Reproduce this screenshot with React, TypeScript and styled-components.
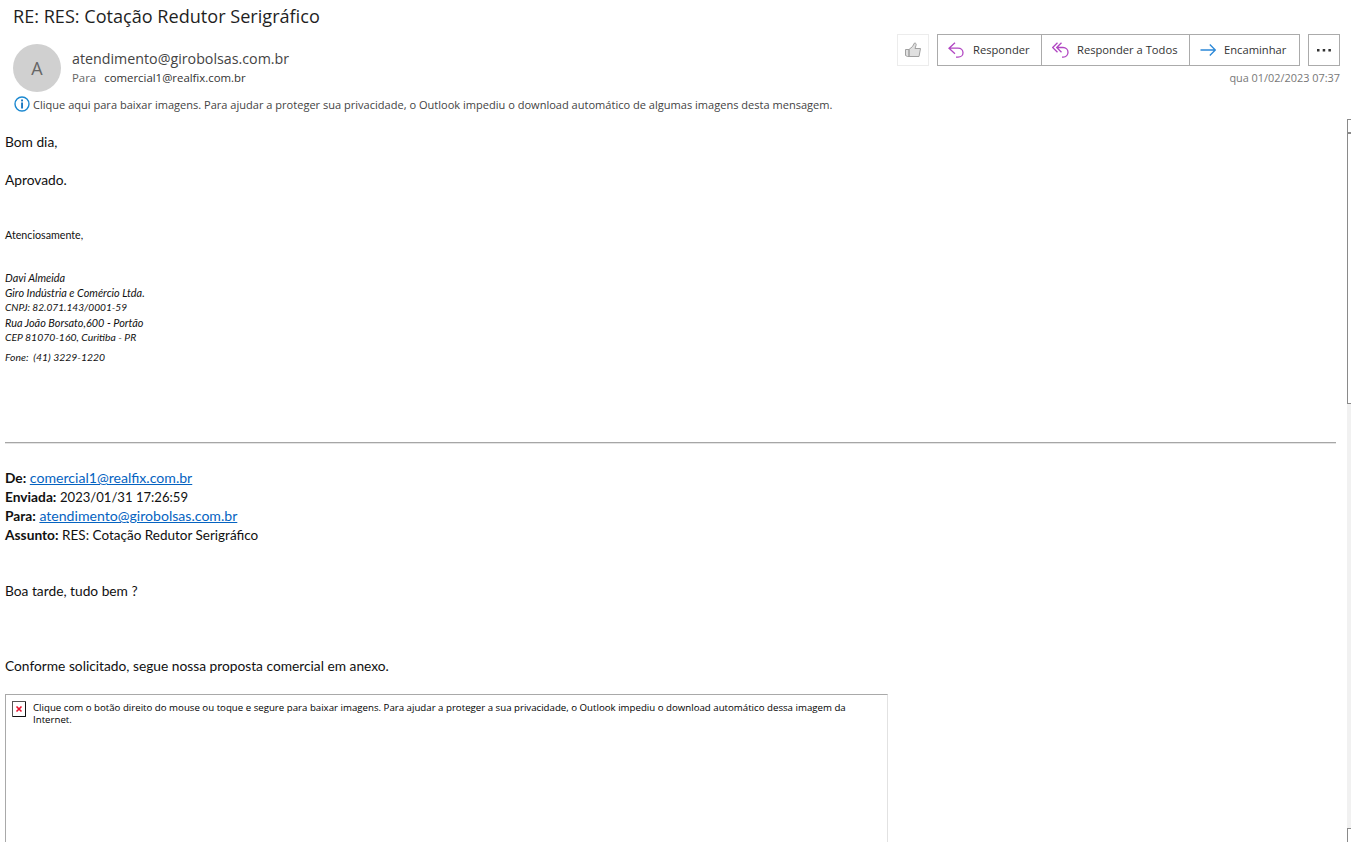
import React from "react";
import styled, { createGlobalStyle } from "styled-components";

const Global = createGlobalStyle`
  html, body { margin: 0; padding: 0; background: #fff; }
  body { font-family: "Open Sans", "Liberation Sans", sans-serif; color: #000; }
`;

const Page = styled.div`
  position: relative;
  width: 1351px;
  height: 842px;
  overflow: hidden;
  background: #fff;
`;

const Header = styled.header`
  height: 118px;
  padding: 6px 11px 0 13px;
  box-sizing: border-box;
`;

const Title = styled.h1`
  margin: 0;
  height: 24px;
  font-size: 18.1px;
  line-height: 21px;
  font-weight: 400;
  color: #1f1f1f;
`;

const HeaderRow = styled.div`
  display: flex;
  justify-content: space-between;
  align-items: flex-start;
  height: 58px;
  padding-top: 4px;
`;

const Sender = styled.div`
  display: flex;
  gap: 11px;
  margin-top: 10px;
`;

const Avatar = styled.div`
  width: 48px;
  height: 48px;
  border-radius: 50%;
  background: #d0d0d0;
  color: #666;
  font-size: 18px;
  display: flex;
  align-items: center;
  justify-content: center;
`;

const SenderText = styled.div`
  padding-top: 5px;
`;

const SenderName = styled.div`
  font-size: 14.25px;
  line-height: 20px;
  color: #444;
`;

const Recipient = styled.div`
  display: flex;
  gap: 8px;
  font-size: 11.4px;
  line-height: 17px;
  color: #333;
`;

const RecipientLabel = styled.span`
  color: #666;
`;

const Actions = styled.div`
  display: flex;
  flex-direction: column;
  align-items: flex-end;
`;

const ActionBar = styled.div`
  display: flex;
  align-items: center;
`;

const LikeButton = styled.button`
  width: 32px;
  height: 32px;
  margin-right: 8px;
  padding: 0;
  background: #fff;
  border: 1px solid #ececec;
  display: flex;
  align-items: center;
  justify-content: center;
`;

const Group = styled.div`
  display: flex;
  height: 32px;
  box-sizing: border-box;
  border: 1px solid #ababab;
`;

const ActionButton = styled.button<{ $width: number }>`
  width: ${(p) => p.$width}px;
  display: flex;
  align-items: center;
  gap: 8px;
  padding: 0 0 2px 10px;
  background: #fff;
  border: 0;
  border-right: 1px solid #ababab;
  font-family: inherit;
  font-size: 11.2px;
  color: #333;
  white-space: nowrap;
  &:last-child { border-right: 0; }
  svg { margin-top: 2px; }
`;

const MoreButton = styled.button`
  width: 32px;
  height: 32px;
  margin-left: 8px;
  padding: 0;
  background: #fff;
  border: 1px solid #ababab;
  display: flex;
  align-items: center;
  justify-content: center;
`;

const DateText = styled.div`
  font-size: 10.9px;
  line-height: 16px;
  margin-top: 4px;
  color: #777;
`;

const Notice = styled.div`
  display: flex;
  align-items: center;
  gap: 3px;
  margin-left: 1px;
  margin-top: 3px;
  height: 18px;
  font-size: 11.05px;
  color: #444;
  white-space: nowrap;
`;

const Body = styled.main`
  padding: 14px 15px 0 5px;
  font-family: Lato, "Liberation Sans", sans-serif;
  font-size: 13.75px;
  color: #111;
`;

const Para = styled.p<{ $top?: number }>`
  margin: ${(p) => p.$top ?? 0}px 0 0;
  line-height: 19px;
`;

const Small = styled.p`
  margin: 38px 0 0;
  font-size: 10.7px;
  line-height: 15px;
`;

const Signature = styled.div`
  margin-top: 28px;
  font-style: italic;
`;

const SignatureLine = styled.div<{ $size?: number; $gap?: number }>`
  font-size: ${(p) => p.$size ?? 10.9}px;
  line-height: 15px;
  margin-top: ${(p) => p.$gap ?? 0}px;
`;

const Rule = styled.hr`
  margin: 77px 0 0;
  border: 0;
  border-top: 1px solid #a6a6a6;
  border-bottom: 1px solid #e4e4e4;
`;

const Meta = styled.div`
  margin-top: 24px;
`;

const MetaLine = styled.div`
  height: 19px;
  line-height: 19px;
`;

const MetaLabel = styled.b`
  font-weight: 700;
`;

const MetaValue = styled.span<{ $size: number }>`
  font-size: ${(p) => p.$size}px;
`;

const MailLink = styled.a`
  color: #0563c1;
  font-size: 14.1px;
  text-decoration: underline;
`;

const Placeholder = styled.div`
  margin-top: 19px;
  width: 883px;
  height: 160px;
  box-sizing: border-box;
  border: 1px solid #a9a9a9;
  border-right-color: #e2e2e2;
  padding: 7px 38px 0 6px;
  display: flex;
  gap: 7px;
  font-family: "Open Sans", "Liberation Sans", sans-serif;
  font-size: 9.68px;
  line-height: 12px;
  color: #000;
`;

const BrokenImage = styled.span`
  flex: none;
  width: 14px;
  height: 16px;
  margin-top: -1px;
`;

const Scrollbar = styled.div`
  position: absolute;
  right: 0;
  top: 119px;
  bottom: 0;
  width: 4px;
  background: #f1f1f1;
  display: flex;
  flex-direction: column;
  justify-content: space-between;
`;

const ScrollUp = styled.div`
  height: 14px;
  background: #fff;
  border: 1px solid #8a8a8a;
  border-right: 0;
  box-sizing: border-box;
`;

const ScrollThumb = styled.div`
  height: 271px;
  box-sizing: border-box;
  background: #fff;
  border: 1px solid #8a8a8a;
  border-right: 0;
`;

const ScrollTop = styled.div``;

const ScrollDown = styled.div`
  height: 14px;
  background: #fff;
  border-left: 1px solid #8a8a8a;
  border-top: 1px solid #8a8a8a;
  box-sizing: border-box;
`;

const ThumbIcon = () => (
  <svg width="18" height="16" viewBox="0 0 18 16" fill="#e0e0e0" stroke="#a0a0a0" strokeWidth="1">
    <path d="M1.500 7.500h3.500v7H3.500l-2-1z M5 7.500l3.500-3 2-3.500c1.500 0 2 1 1.500 2.500L11 6.500h5.500l-1.500 8H5z" strokeLinejoin="round" />
  </svg>
);

const ReplyIcon = () => (
  <svg width="17" height="16" viewBox="0 0 17 16" fill="none" stroke="#b146c2" strokeWidth="1.300">
    <path d="M7 0.700 1 6.200l6 5.500M1 6.200h9c3 0 5 2 5 4.500 0 2.500-2 4.500-5 4.500H8" />
  </svg>
);

const ReplyAllIcon = () => (
  <svg width="17" height="16" viewBox="0 0 17 16" fill="none" stroke="#b146c2" strokeWidth="1.300">
    <path d="M5.500 0.700 0.700 5.500l4.800 4.800M9.500 0.700 4.700 5.500l4.800 4.800M4.700 5.500h6.300c3 0 5 2.200 5 4.800s-1.800 4.800-4.800 4.800H10" />
  </svg>
);

const ForwardIcon = () => (
  <svg width="16" height="16" viewBox="0 0 16 16" fill="none" stroke="#2b88d8" strokeWidth="1.300">
    <path d="M0.500 8h14.500M9.800 2.500 15.300 8l-5.500 5.500" />
  </svg>
);

const MoreIcon = () => (
  <svg width="16" height="4" viewBox="0 0 16 4" fill="#333">
    <rect x="1" y="1" width="2.500" height="2.500" />
    <rect x="6.700" y="1" width="2.500" height="2.500" />
    <rect x="12.400" y="1" width="2.500" height="2.500" />
  </svg>
);

const InfoIcon = () => (
  <svg width="16" height="16" viewBox="0 0 16 16" fill="none">
    <circle cx="8" cy="8" r="7" stroke="#1b88d0" strokeWidth="1.400" />
    <rect x="7.100" y="3.500" width="1.900" height="1.900" fill="#1b78c0" />
    <rect x="7.100" y="6.500" width="1.900" height="6" fill="#1b78c0" />
  </svg>
);

const BrokenIcon = () => (
  <svg width="14" height="16" viewBox="0 0 14 16">
    <rect x="0.500" y="0.500" width="13" height="15" fill="#fff" stroke="#555" />
    <path d="M1 15.500h12.500V1" fill="none" stroke="#111" />
    <path d="M4.500 5.500l5 5M9.500 5.500l-5 5" stroke="#e8112d" strokeWidth="1.600" />
  </svg>
);

export default function App() {
  return (
    <Page>
      <Global />
      <Header>
        <Title>RE: RES: Cotação Redutor Serigráfico</Title>
        <HeaderRow>
          <Sender>
            <Avatar>A</Avatar>
            <SenderText>
              <SenderName>atendimento@girobolsas.com.br</SenderName>
              <Recipient>
                <RecipientLabel>Para</RecipientLabel>
                <span>comercial1@realfix.com.br</span>
              </Recipient>
            </SenderText>
          </Sender>
          <Actions>
            <ActionBar>
              <LikeButton aria-label="Curtir"><ThumbIcon /></LikeButton>
              <Group>
                <ActionButton $width={104}><ReplyIcon />Responder</ActionButton>
                <ActionButton $width={148}><ReplyAllIcon />Responder a Todos</ActionButton>
                <ActionButton $width={109}><ForwardIcon />Encaminhar</ActionButton>
              </Group>
              <MoreButton aria-label="Mais"><MoreIcon /></MoreButton>
            </ActionBar>
            <DateText>qua 01/02/2023 07:37</DateText>
          </Actions>
        </HeaderRow>
        <Notice>
          <InfoIcon />
          Clique aqui para baixar imagens. Para ajudar a proteger sua privacidade, o Outlook impediu o download automático de algumas imagens desta mensagem.
        </Notice>
      </Header>
      <Body>
        <Para>Bom dia,</Para>
        <Para $top={19}>Aprovado.</Para>
        <Small>Atenciosamente,</Small>
        <Signature>
          <SignatureLine>Davi Almeida</SignatureLine>
          <SignatureLine>Giro Indústria e Comércio Ltda.</SignatureLine>
          <SignatureLine $size={10.15}>CNPJ: 82.071.143/0001-59</SignatureLine>
          <SignatureLine>Rua João Borsato,600 - Portão</SignatureLine>
          <SignatureLine $size={10.4}>CEP 81070-160, Curitiba - PR</SignatureLine>
          <SignatureLine $size={10.4} $gap={5}>Fone:&nbsp; (41) 3229-1220</SignatureLine>
        </Signature>
        <Rule />
        <Meta>
          <MetaLine><MetaLabel>De:</MetaLabel> <MailLink href="#">comercial1@realfix.com.br</MailLink></MetaLine>
          <MetaLine><MetaLabel>Enviada:</MetaLabel> <MetaValue $size={13.1}>2023/01/31 17:26:59</MetaValue></MetaLine>
          <MetaLine><MetaLabel>Para:</MetaLabel> <MailLink href="#">atendimento@girobolsas.com.br</MailLink></MetaLine>
          <MetaLine><MetaLabel>Assunto:</MetaLabel> <MetaValue $size={13.5}>RES: Cotação Redutor Serigráfico</MetaValue></MetaLine>
        </Meta>
        <Para $top={37}>Boa tarde, tudo bem ?</Para>
        <Para $top={56}>Conforme solicitado, segue nossa proposta comercial em anexo.</Para>
        <Placeholder>
          <BrokenImage><BrokenIcon /></BrokenImage>
          <span>Clique com o botão direito do mouse ou toque e segure para baixar imagens. Para ajudar a proteger a sua privacidade, o Outlook impediu o download automático dessa imagem da Internet.</span>
        </Placeholder>
      </Body>
      <Scrollbar>
        <ScrollTop>
          <ScrollUp />
          <ScrollThumb />
        </ScrollTop>
        <ScrollDown />
      </Scrollbar>
    </Page>
  );
}
